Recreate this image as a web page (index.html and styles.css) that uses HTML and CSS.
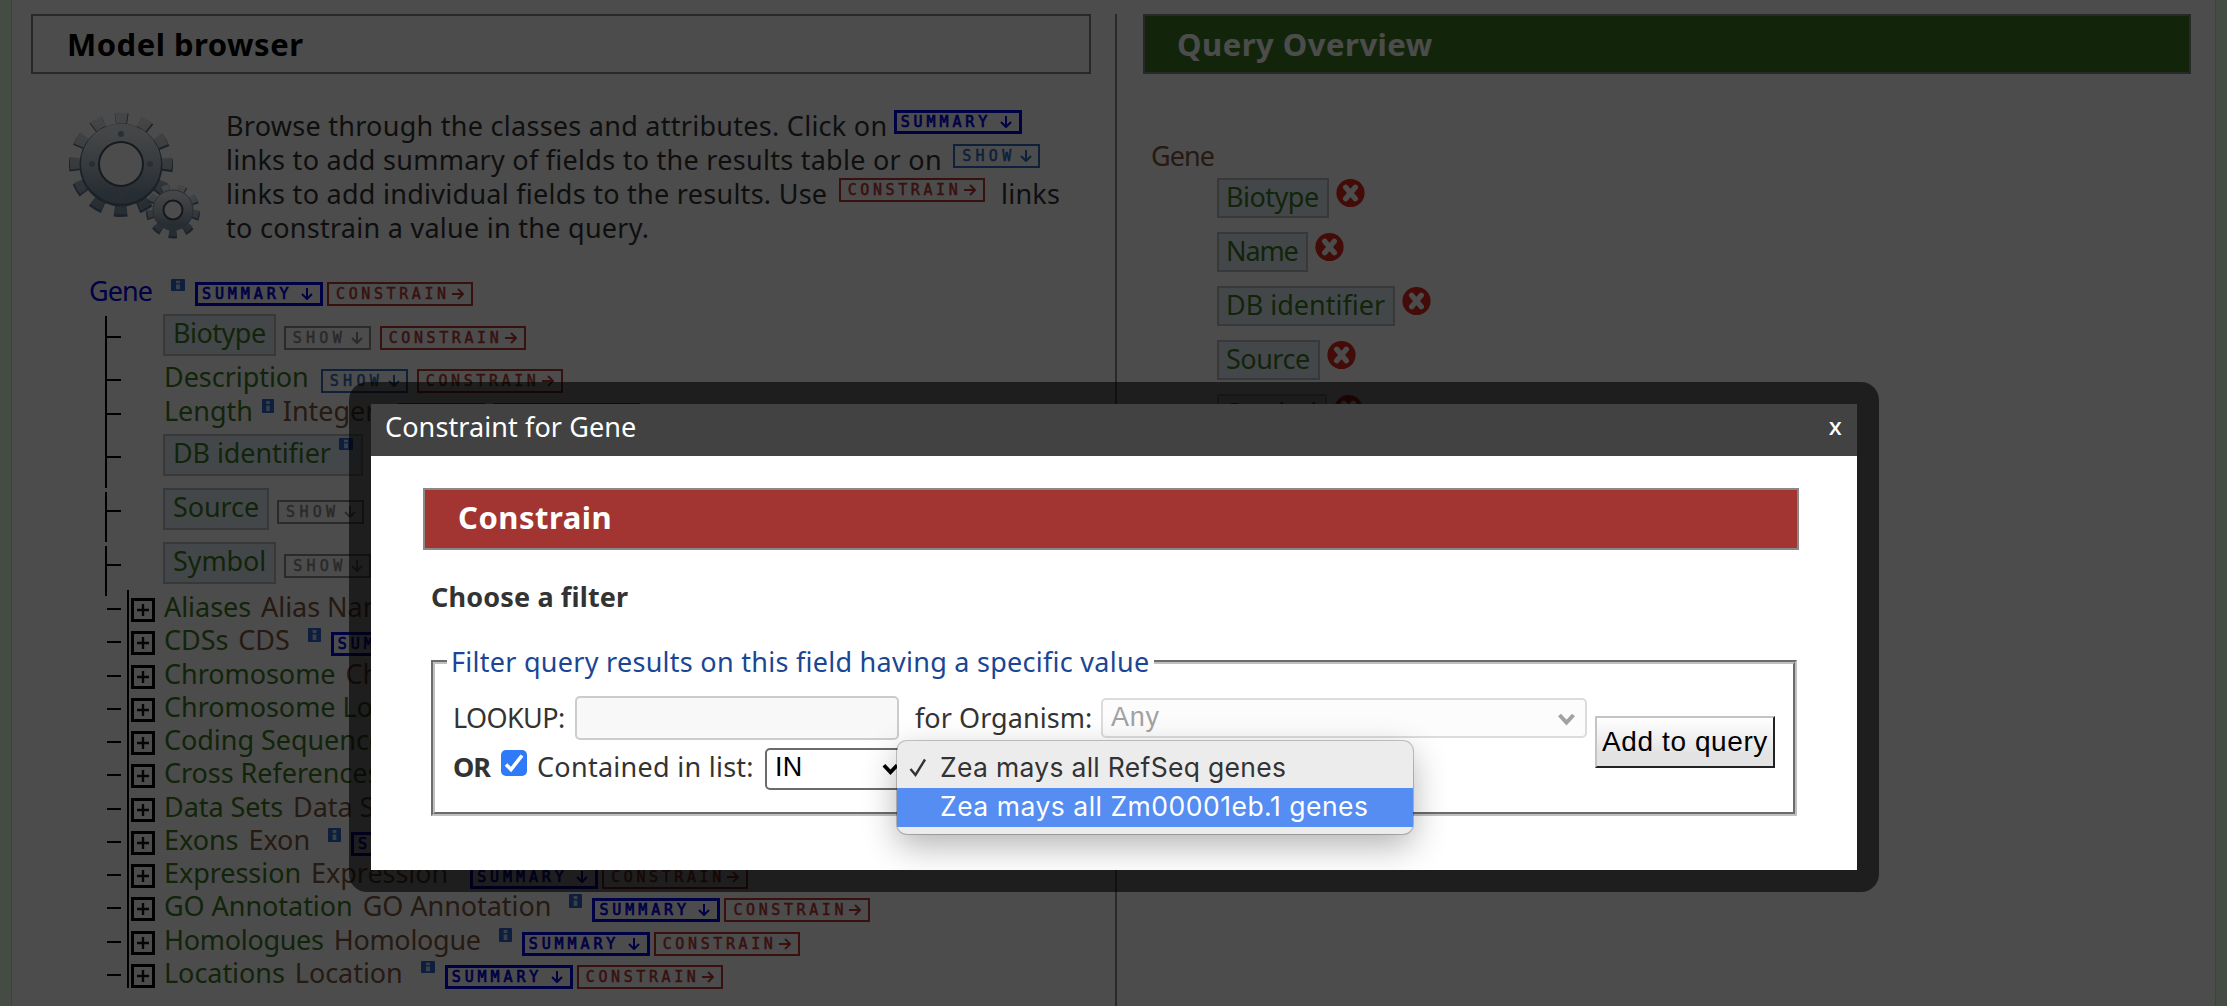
FILE: index.html
```
<!DOCTYPE html>
<html lang="en">
<head>
<meta charset="utf-8">
<title>Query Builder</title>
<link rel="stylesheet" href="styles.css">
</head>
<body>
<svg class="defs" aria-hidden="true">
  <symbol id="down" viewBox="0 0 12 12"><path d="M6 0v11M1 6l5 5 5-5" fill="none" stroke="currentColor" stroke-width="2"/></symbol>
  <symbol id="right" viewBox="0 0 12 12"><path d="M0 6h11M6 1l5 5-5 5" fill="none" stroke="currentColor" stroke-width="2"/></symbol>
  <symbol id="info" viewBox="0 0 14 14" preserveAspectRatio="none"><rect width="14" height="14" rx="1" fill="#2c68cc"/><path d="M5 2h4v3H5zM5 6.500h4V12H5z" fill="#c4d8f4"/></symbol>
  <symbol id="plus" viewBox="0 0 24 24"><path d="M1.500 1.500h21v21h-21z" fill="none" stroke="#000" stroke-width="3"/><path d="M12 6v12M6 12h12" stroke="#111" stroke-width="2.400"/></symbol>
  <symbol id="remove" viewBox="0 0 30 30"><circle cx="15" cy="15" r="14.600" fill="#e02a20"/><path d="M10 9l10 12M20 9L10 21" stroke="#fff" stroke-width="5.500" stroke-linecap="round"/></symbol>
</svg>

<main class="page">
  <section class="browser">
    <h2 class="heading">Model browser</h2>
    <div class="intro">
      <svg class="gears" viewBox="0 0 134 130">
        <defs><linearGradient id="steel" x1="0" y1="0" x2="0" y2="1"><stop offset="0" stop-color="#e4eaee"/><stop offset=".5" stop-color="#bcc7d1"/><stop offset="1" stop-color="#8196aa"/></linearGradient></defs>
        <g fill="none">
          <circle cx="52" cy="51" r="46" stroke="#5f748a" stroke-width="12" stroke-dasharray="12.500 11.580" stroke-dashoffset="6"/>
          <circle cx="52" cy="49.500" r="45.500" stroke="url(#steel)" stroke-width="11" stroke-dasharray="11.500 12.320" stroke-dashoffset="5.800"/>
          <circle cx="52" cy="51" r="32" stroke="#5d7288" stroke-width="19"/>
          <circle cx="52" cy="49.500" r="31" stroke="url(#steel)" stroke-width="18"/>
          <circle cx="52" cy="50" r="22" stroke="#4b5a68" stroke-width="2"/>
          <circle cx="104" cy="97.500" r="23" stroke="#5f748a" stroke-width="8" stroke-dasharray="8 8.060"/>
          <circle cx="104" cy="96" r="22.500" stroke="url(#steel)" stroke-width="7" stroke-dasharray="7.500 8.210"/>
          <circle cx="104" cy="96" r="15" stroke="url(#steel)" stroke-width="11"/>
          <circle cx="104" cy="96" r="20" stroke="#8397aa" stroke-width="1"/>
          <circle cx="104" cy="96" r="9.500" stroke="#44525f" stroke-width="2"/>
        </g>
        <g fill="#8d9dad"><circle cx="52" cy="20" r="3"/><circle cx="52" cy="79" r="3"/><circle cx="23" cy="50" r="3"/><circle cx="81" cy="50" r="3"/></g>
      </svg>
      <p class="help">Browse through the classes and attributes. Click on <span class="badge summary">SUMMARY<svg><use href="#down"/></svg></span><br>
      links to add summary of fields to the results table or on <span class="badge show">SHOW<svg><use href="#down"/></svg></span><br>
      links to add individual fields to the results. Use <span class="badge constrain">CONSTRAIN<svg><use href="#right"/></svg></span> links<br>
      to constrain a value in the query.</p>
    </div>

    <div class="tree">
      <div class="row root"><span class="name">Gene</span><svg class="info flat"><use href="#info"/></svg><span class="badge summary">SUMMARY<svg><use href="#down"/></svg></span><span class="badge constrain">CONSTRAIN<svg><use href="#right"/></svg></span></div>

      <div class="row attr boxed first"><i class="twig"></i><span class="name">Biotype</span><span class="badge show off">SHOW<svg><use href="#down"/></svg></span><span class="badge constrain">CONSTRAIN<svg><use href="#right"/></svg></span></div>
      <div class="row attr"><i class="twig"></i><span class="name">Description</span><span class="badge show">SHOW<svg><use href="#down"/></svg></span><span class="badge constrain">CONSTRAIN<svg><use href="#right"/></svg></span></div>
      <div class="row attr"><i class="twig"></i><span class="name">Length</span><svg class="info"><use href="#info"/></svg><span class="type">Integer</span><span class="badge show after-type">SHOW<svg><use href="#down"/></svg></span><span class="badge constrain">CONSTRAIN<svg><use href="#right"/></svg></span></div>
      <div class="row attr boxed"><i class="twig"></i><span class="name">DB identifier<svg class="info flat"><use href="#info"/></svg></span><span class="badge show off">SHOW<svg><use href="#down"/></svg></span><span class="badge constrain">CONSTRAIN<svg><use href="#right"/></svg></span></div>
      <div class="row attr boxed split"><i class="twig"></i><span class="name">Source</span><span class="badge show off">SHOW<svg><use href="#down"/></svg></span><span class="badge constrain">CONSTRAIN<svg><use href="#right"/></svg></span></div>
      <div class="row attr boxed split"><i class="twig"></i><span class="name">Symbol</span><span class="badge show off">SHOW<svg><use href="#down"/></svg></span><span class="badge constrain">CONSTRAIN<svg><use href="#right"/></svg></span></div>

      <div class="refs">
        <div class="row ref"><svg class="plus"><use href="#plus"/></svg><span class="name">Aliases</span><span class="type">Alias Name</span></div>
        <div class="row ref"><svg class="plus"><use href="#plus"/></svg><span class="name">CDSs</span><span class="type">CDS</span><svg class="info"><use href="#info"/></svg><span class="badge summary">SUMMARY<svg><use href="#down"/></svg></span><span class="badge constrain">CONSTRAIN<svg><use href="#right"/></svg></span></div>
        <div class="row ref"><svg class="plus"><use href="#plus"/></svg><span class="name">Chromosome</span><span class="type">Chromosome</span></div>
        <div class="row ref"><svg class="plus"><use href="#plus"/></svg><span class="name">Chromosome Location</span><span class="type">Location</span></div>
        <div class="row ref"><svg class="plus"><use href="#plus"/></svg><span class="name">Coding Sequences</span></div>
        <div class="row ref"><svg class="plus"><use href="#plus"/></svg><span class="name">Cross References</span></div>
        <div class="row ref"><svg class="plus"><use href="#plus"/></svg><span class="name">Data Sets</span><span class="type">Data Set</span></div>
        <div class="row ref"><svg class="plus"><use href="#plus"/></svg><span class="name">Exons</span><span class="type">Exon</span><svg class="info"><use href="#info"/></svg><span class="badge summary">SUMMARY<svg><use href="#down"/></svg></span><span class="badge constrain">CONSTRAIN<svg><use href="#right"/></svg></span></div>
        <div class="row ref"><svg class="plus"><use href="#plus"/></svg><span class="name">Expression</span><span class="type">Expression</span><span class="badge summary after-type">SUMMARY<svg><use href="#down"/></svg></span><span class="badge constrain">CONSTRAIN<svg><use href="#right"/></svg></span></div>
        <div class="row ref"><svg class="plus"><use href="#plus"/></svg><span class="name">GO Annotation</span><span class="type">GO Annotation</span><svg class="info"><use href="#info"/></svg><span class="badge summary">SUMMARY<svg><use href="#down"/></svg></span><span class="badge constrain">CONSTRAIN<svg><use href="#right"/></svg></span></div>
        <div class="row ref tight"><svg class="plus"><use href="#plus"/></svg><span class="name">Homologues</span><span class="type">Homologue</span><svg class="info"><use href="#info"/></svg><span class="badge summary">SUMMARY<svg><use href="#down"/></svg></span><span class="badge constrain">CONSTRAIN<svg><use href="#right"/></svg></span></div>
        <div class="row ref"><svg class="plus"><use href="#plus"/></svg><span class="name">Locations</span><span class="type">Location</span><svg class="info flat"><use href="#info"/></svg><span class="badge summary">SUMMARY<svg><use href="#down"/></svg></span><span class="badge constrain">CONSTRAIN<svg><use href="#right"/></svg></span></div>
      </div>
    </div>
  </section>

  <section class="overview">
    <h2 class="heading green">Query Overview</h2>
    <div class="class-name">Gene</div>
    <div class="picked"><span>Biotype</span><svg><use href="#remove"/></svg></div>
    <div class="picked"><span class="snug">Name</span><svg><use href="#remove"/></svg></div>
    <div class="picked"><span class="loose">DB identifier</span><svg><use href="#remove"/></svg></div>
    <div class="picked"><span>Source</span><svg><use href="#remove"/></svg></div>
    <div class="picked"><span>Symbol</span><svg><use href="#remove"/></svg></div>
  </section>
</main>

<div class="overlay"></div>

<div class="dialog">
  <div class="panel">
    <header class="bar"><span>Constraint for Gene</span><span class="close">x</span></header>
    <h2 class="heading red">Constrain</h2>
    <h3 class="choose">Choose a filter</h3>
    <fieldset class="filter">
      <legend>Filter query results on this field having a specific value</legend>
      <div class="fields">
        <div class="lines">
          <div class="line">
            <span class="lookup">LOOKUP:</span><span class="box text"></span>
            <span class="organism">for Organism:</span>
            <span class="box any">Any<svg viewBox="0 0 18 12"><path d="M2 2l7 7.500 7-7.500" fill="none" stroke="#a2a2a2" stroke-width="4"/></svg></span>
          </div>
          <div class="line second">
            <b>OR</b>
            <svg class="check" viewBox="0 0 26 26"><rect width="26" height="26" rx="5" fill="#2f7af8"/><path d="M5 14.500l5 5L21 5.500" fill="none" stroke="#fff" stroke-width="3.600"/></svg>
            <span class="contained">Contained in list:</span>
            <span class="box in">IN<svg viewBox="0 0 18 12"><path d="M2 2l7 7.500 7-7.500" fill="none" stroke="#000" stroke-width="4"/></svg></span>
          </div>
        </div>
        <button class="add">Add to query</button>
      </div>
    </fieldset>
  </div>
</div>

<div class="menu">
  <div class="option"><svg viewBox="0 0 18 19"><path d="M1.500 11l5 6L16 1.500" fill="none" stroke="#333" stroke-width="2.400"/></svg><span>Zea mays all RefSeq genes</span></div>
  <div class="option active"><span>Zea mays all Zm00001eb.1 genes</span></div>
</div>
</body>
</html>
```
FILE: styles.css
```
* { box-sizing: border-box; }
body {
  margin: 0;
  height: 1006px;
  overflow: hidden;
  background: #e4fde4;
  color: #333;
  font: 27px/34px "Noto Sans", sans-serif;
  letter-spacing: .27px;
  white-space: nowrap;
}
.defs { display: none; }
svg { display: block; flex: none; overflow: visible; }

.page {
  display: flex;
  height: 1006px;
  margin: 0 11px;
  padding: 14px 24px 0 19px;
  background: #fff;
  border: solid #ccdccc;
  border-width: 0 1px;
}

.heading {
  height: 60px;
  margin: 0;
  padding-left: 34px;
  border: 2px solid #888;
  font-size: 31px;
  line-height: 56px;
  letter-spacing: .5px;
  color: #000;
}
.heading.green { padding-left: 32px; background: #3c7d26; color: #fff; }
.heading.red { height: 62px; padding-left: 33px; background: #a23531; color: #fff; line-height: 55px; }

.browser {
  width: 1086px;
  padding-right: 24px;
  border-right: 2px solid #8a8a8a;
}
.intro { display: flex; margin-top: 35px; }
.gears { width: 134px; height: 130px; margin: 5px 0 0 38px; }
.help { margin: 0 0 0 23px; }
.help .badge { vertical-align: top; margin: 1px 3px 0 4px; }
.help .badge.summary { margin-left: -1px; }
.help .badge.constrain { margin-right: 9px; }

.badge {
  display: inline-flex;
  flex: none;
  align-items: center;
  justify-content: space-between;
  height: 24px;
  margin-top: 9px;
  border: 2px solid;
  font: 15px/20px "DejaVu Sans Mono", monospace;
  -webkit-text-stroke: .5px currentColor;
}
.badge svg { width: 12px; height: 12px; }
.badge.summary { width: 128px; padding: 0 7px 0 4px; border-width: 3px; color: #0000e6; letter-spacing: 3.900px; -webkit-text-stroke-width: .7px; }
.badge.constrain { width: 146px; padding: 0 7px 0 7px; color: #bb3a34; letter-spacing: 3.600px; }
.badge.show { width: 87px; padding: 0 6px 0 7px; color: #2f6cc4; letter-spacing: 4.300px; }
.badge.off { color: #8c8c8c; }

.tree { margin: 29px 0 0 59px; }
.row { display: flex; align-items: flex-start; height: 34px; letter-spacing: -.05px; }
.row.tight { letter-spacing: -.3px; }
.name { color: #3c7a24; }
.type { margin-left: 10px; color: #80583c; }
.info { width: 13px; height: 14px; margin: 5px 0 0 18px; }
.info.flat { width: 14px; height: 12px; }
.info + .summary { margin-left: 10px; }
.summary + .constrain { margin-left: 4px; }
.show + .constrain { margin-left: 9px; }
.after-type { margin-left: 22px; }

.root .name { width: 63px; margin-left: -1px; letter-spacing: -.9px; }
.root .name { color: #0000e6; }
.root .info { margin-left: 19px; }
.root .badge { margin-top: 8px; }

.attr { margin-left: 15px; }
.attr .name + .show { margin-left: 12px; }
.attr .name + .info { width: 12px; margin-left: 9px; }
.attr .info + .type { margin-left: 9px; }
.twig {
  align-self: stretch;
  width: 16px;
  margin: 8px 43px -8px 0;
  border-left: 2px solid #000;
  background: linear-gradient(#000, #000) 0 11px / 14px 2px no-repeat;
}
.boxed { height: 54px; letter-spacing: -.1px; }
.boxed.first { height: 52px; }
.boxed .twig { margin: 8px 42px -6px 0; background-position-y: 20px; }
.boxed.first .twig { margin-bottom: -8px; }
.split .twig { margin: 10px 42px -6px 0; background-position-y: 18px; }
.boxed .name {
  display: flex;
  height: 42px;
  margin-top: 6px;
  padding: 0 8px;
  border: 2px solid #bcbcbc;
  background: #e3eff8;
}
.attr.boxed .name + .show { margin-left: 8px; }
.boxed .badge { margin-top: 18px; }
.boxed .name .info { margin: 2px 0 0 8px; }
.boxed.first .name { letter-spacing: -.5px; }

.refs { margin: 0 0 0 37px; border-left: 2px solid #000; height: 398px; }
.ref { height: 33.270px; }
.ref::before { content: ""; width: 14px; height: 2px; margin: 18px 8px 0 -22px; background: #000; }
.ref .plus { width: 24px; height: 24px; margin: 8px 9px 0 2px; }

.overview { flex: 1; padding-left: 26px; }
.class-name { margin: 65px 0 5px 8px; color: #80583c; letter-spacing: -.9px; }
.picked { display: flex; height: 54px; padding-left: 74px; letter-spacing: -.5px; }
.picked span {
  height: 40px;
  padding: 0 8px 0 7px;
  border: 2px solid #bcbcbc;
  background: #e3eff8;
  color: #3c7a24;
}
.picked .snug { letter-spacing: -1.100px; }
.picked .loose { letter-spacing: 0; }
.picked svg { width: 29px; height: 30px; margin-left: 7px; }

.overlay { position: fixed; inset: 0; background: rgba(0, 0, 0, .7); }

.dialog {
  position: fixed;
  left: 349px;
  top: 382px;
  width: 1530px;
  height: 510px;
  padding: 22px;
  border-radius: 18px;
  background: rgba(0, 0, 0, .6);
}
.panel { height: 466px; background: #fff; }
.bar {
  display: flex;
  justify-content: space-between;
  height: 52px;
  padding: 6px 15px 0 14px;
  background: #424242;
  color: #fff;
  letter-spacing: .1px;
}
.bar .close { font-size: 24px; font-weight: 500; line-height: 31px; }
.panel .heading { margin: 32px 58px 0 52px; }
.choose { margin: 30px 0 0 60px; font-size: 27px; letter-spacing: .150px; }
.filter {
  width: 1366px;
  height: 171px;
  margin: 31px 0 0 60px;
  padding: 0 0 0 18px;
  border: 4px groove #c0c0c0;
}
.filter legend { margin-left: -6px; padding: 0 5px 0 4px; color: #1a4694; }
.fields { display: flex; padding-top: 17px; }
.lines { width: 1142px; }
.line { display: flex; height: 52px; }
.line > span:not(.box), .line > b { line-height: 44px; }
.box {
  display: flex;
  justify-content: space-between;
  border: 2px solid;
  border-radius: 5px;
  font: 27px/34px "Liberation Sans", sans-serif;
}
.lookup { width: 122px; letter-spacing: -.6px; }
.text { width: 324px; height: 44px; border-color: #ccc; background: #f8f8f8; }
.organism { width: 186px; margin-left: 16px; letter-spacing: .050px; }
.any { width: 486px; height: 40px; margin-top: 2px; padding: 0 9px 0 8px; border-color: #dcdcdc; background: #fcfcfc; color: #a2a2a2; letter-spacing: .8px; }
.any svg { width: 19px; height: 12px; margin-top: 13px; }
.second b { width: 48px; letter-spacing: -1px; margin-top: -3px; }
.check { width: 26px; height: 26px; margin-top: 2px; }
.contained { width: 228px; margin: -3px 0 0 10px; }
.in { width: 142px; height: 42px; padding: 0 6px 0 8px; border-color: #6b6b6b; color: #000; }
.in svg { width: 17px; height: 12px; margin-top: 13px; }
.add {
  width: 180px;
  height: 52px;
  margin-top: 20px;
  padding: 0;
  border: 2px outset #bbb;
  border-color: #c4c4c4 #777 #777 #c4c4c4;
  background: linear-gradient(#fff, #e3e3e3 75%);
  color: #000;
  font: 28px "Liberation Sans", sans-serif;
  letter-spacing: .6px;
}

.menu {
  position: fixed;
  left: 897px;
  top: 741px;
  width: 516px;
  height: 93px;
  padding: 8px 0;
  border-radius: 10px;
  background: #ececec;
  box-shadow: 0 0 0 1px rgba(0, 0, 0, .22), 0 12px 34px rgba(0, 0, 0, .3);
  font: 26.500px/36px Inter, sans-serif;
  letter-spacing: .3px;
}
.option { display: flex; height: 39px; color: #333; }
.option svg { width: 18px; height: 19px; margin: 9px 0 0 12px; }
.option span { margin-left: 13px; }
.option.active { background: #558df2; color: #fff; }
.option.active span { margin-left: 43px; letter-spacing: .5px; }
```
